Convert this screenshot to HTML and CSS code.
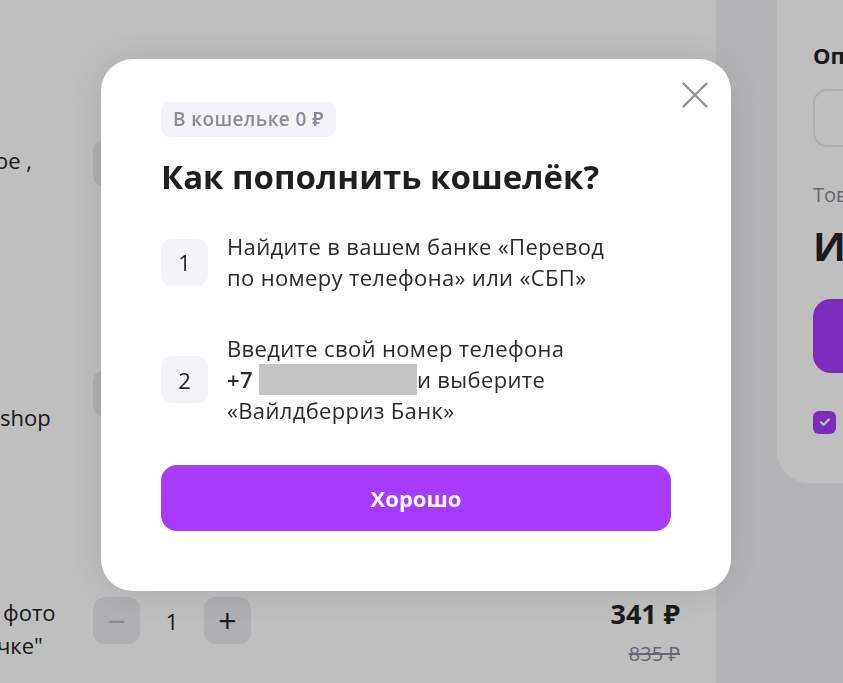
FILE: index.html
```html
<!DOCTYPE html>
<html lang="ru">
  <head>
    <meta charset="utf-8">
    <meta name="viewport" content="width=device-width">
    <title>Корзина — пополнение кошелька</title>
    <link rel="stylesheet" href="styles.css">
  </head>

<body>
  <div class="page">
    <div class="cart">
      <div class="item item-first">
        <div class="item-name">
          <p>ое ,</p>
        </div>
        <div class="counter">
          <button class="count-btn count-minus">−</button>
          <span class="count-value">1</span>
          <button class="count-btn">+</button>
        </div>
        <div class="item-price">
          <div class="price-now">199 ₽</div>
          <div class="price-old">520 ₽</div>
        </div>
      </div>

      <div class="item item-second">
        <div class="item-name">
          <p>shop</p>
        </div>
        <div class="counter">
          <button class="count-btn count-minus">−</button>
          <span class="count-value">1</span>
          <button class="count-btn">+</button>
        </div>
        <div class="item-price">
          <div class="price-now">245 ₽</div>
          <div class="price-old">610 ₽</div>
        </div>
      </div>

      <div class="item item-third">
        <div class="item-name">
          <p>фото</p>
          <p class="name-cut">чке"</p>
        </div>
        <div class="counter">
          <button class="count-btn count-minus">−</button>
          <span class="count-value">1</span>
          <button class="count-btn">+</button>
        </div>
        <div class="item-price">
          <div class="price-now">341 ₽</div>
          <div class="price-old">835 ₽</div>
        </div>
      </div>
    </div>

    <aside class="side">
      <div class="summary">
        <div class="summary-label">Оплата</div>
        <div class="summary-field"></div>
        <div class="summary-muted">Товары, 3 шт.</div>
        <div class="summary-total">Итого</div>
        <button class="summary-btn">Заказать</button>
        <div class="summary-check">
          <span class="check-box">
            <svg width="14" height="14" viewBox="0 0 14 14"><path d="M3 7.2l2.6 2.6L11 4.4" fill="none" stroke="#fff" stroke-width="2.2" stroke-linecap="round" stroke-linejoin="round"/></svg>
          </span>
          <span>Согласен</span>
        </div>
      </div>
    </aside>
  </div>

  <div class="overlay">
    <div class="modal">
      <button class="modal-close" aria-label="Закрыть">
        <svg width="26" height="26" viewBox="0 0 26 26"><path d="M1.5 1.5l23 23M24.5 1.5l-23 23" stroke="#8f8f8f" stroke-width="2.4" stroke-linecap="round"/></svg>
      </button>
      <div class="wallet-badge">В кошельке 0 ₽</div>
      <h1 class="modal-title">Как пополнить кошелёк?</h1>
      <ol class="steps">
        <li class="step">
          <span class="step-num">1</span>
          <p class="step-text">Найдите в вашем банке «Перевод по номеру телефона» или «СБП»</p>
        </li>
        <li class="step">
          <span class="step-num">2</span>
          <p class="step-text">Введите свой номер телефона<br><b>+7</b> <span class="phone-hidden"></span>и выберите «Вайлдберриз Банк»</p>
        </li>
      </ol>
      <button class="modal-btn">Хорошо</button>
    </div>
  </div>
</body>

</html>
```

FILE: styles.css
```css
* {
  box-sizing: border-box;
}

html, body {
  margin: 0;
  height: 100%;
  overflow: hidden;
}

body {
  font-family: "Open Sans", "Noto Sans", sans-serif;
  color: #242424;
  background: #fff;
}

button {
  font-family: inherit;
  border: 0;
  cursor: pointer;
}

.page {
  display: flex;
  height: 100%;
}

/* cart under the overlay */
.cart {
  width: 716px;
  flex-shrink: 0;
  padding-top: 140px;
}

.item {
  display: flex;
  align-items: flex-start;
  height: 230px;
}

.item-second {
  height: 227px;
}

.item-name {
  width: 93px;
  overflow: hidden;
  font-size: 22px;
  line-height: 33px;
  white-space: nowrap;
}

.item-name p {
  margin: 0;
}

.item-first .item-name {
  padding-top: 4px;
  margin-left: -5px;
  width: 98px;
}

.item-second .item-name {
  padding-top: 31px;
}

.item-third .item-name {
  margin-top: -1px;
  padding-left: 3px;
}

.item-third .name-cut {
  margin-left: -6px;
}

.counter {
  display: flex;
  align-items: center;
}

.count-btn {
  width: 47px;
  height: 47px;
  border-radius: 12px;
  background: #ebebf0;
  color: #242424;
  font-size: 32px;
  line-height: 47px;
  padding: 0;
}

.count-minus {
  color: #b9b9c0;
}

.count-value {
  width: 64px;
  text-align: center;
  font-size: 22px;
}

.item-price {
  margin-left: auto;
  margin-right: 36px;
  text-align: right;
}

.price-now {
  font-size: 27px;
  font-weight: 700;
  line-height: 34px;
}

.price-old {
  margin-top: 9px;
  font-size: 20px;
  color: #8b8a98;
  text-decoration: line-through;
}

/* order summary on the right */
.side {
  flex: 1;
  background: #f1f1f4;
  padding-left: 61px;
}

.summary {
  height: 483px;
  background: #fff;
  border-radius: 0 0 0 32px;
  padding: 40px 0 0 36px;
  white-space: nowrap;
  overflow: hidden;
}

.summary-label {
  font-size: 22px;
  font-weight: 700;
  line-height: 30px;
}

.summary-field {
  width: 200px;
  height: 58px;
  margin-top: 19px;
  border: 2px solid #e8e8ee;
  border-radius: 14px;
}

.summary-muted {
  margin-top: 33px;
  font-size: 20px;
  line-height: 30px;
  color: #8b8a98;
}

.summary-total {
  margin-top: 11px;
  font-size: 40px;
  font-weight: 700;
  line-height: 50px;
}

.summary-btn {
  display: block;
  width: 200px;
  height: 74px;
  margin-top: 28px;
  border-radius: 18px;
  background: #a73afd;
  color: #fff;
  font-size: 20px;
}

.summary-check {
  display: flex;
  align-items: center;
  gap: 12px;
  margin-top: 37px;
  font-size: 18px;
}

.check-box {
  display: flex;
  align-items: center;
  justify-content: center;
  width: 23px;
  height: 23px;
  border-radius: 6px;
  background: #a73afd;
}

/* modal */
.overlay {
  position: fixed;
  inset: 0;
  background: rgba(0, 0, 0, 0.25);
  display: flex;
  align-items: flex-start;
  padding: 59px 0 0 101px;
}

.modal {
  position: relative;
  width: 630px;
  padding: 43px 60px 60px;
  background: #fff;
  border-radius: 32px;
  box-shadow: 0 0 40px rgba(0, 0, 0, 0.12);
}

.modal-close {
  position: absolute;
  top: 23px;
  right: 23px;
  width: 26px;
  height: 26px;
  padding: 0;
  background: none;
}

.modal-close svg {
  display: block;
}

.wallet-badge {
  display: inline-block;
  height: 35px;
  padding: 0 12px;
  border-radius: 9px;
  background: #f4f3f8;
  color: #8b8a98;
  font-size: 19px;
  font-weight: 600;
  line-height: 35px;
  letter-spacing: 0.4px;
}

.modal-title {
  margin: 20px 0 0;
  font-size: 33px;
  font-weight: 700;
  line-height: 40px;
  color: #1f1f1f;
}

.steps {
  list-style: none;
  margin: 34px 0 0;
  padding: 0;
  display: flex;
  flex-direction: column;
  gap: 40px;
}

.step {
  display: flex;
  align-items: center;
  gap: 19px;
}

.step-num {
  flex-shrink: 0;
  width: 47px;
  height: 47px;
  border-radius: 11px;
  background: #f4f3f8;
  display: flex;
  align-items: center;
  justify-content: center;
  font-size: 22px;
  color: #242424;
}

.step-text {
  margin: 0;
  width: 400px;
  font-size: 22px;
  line-height: 31px;
  letter-spacing: 0.35px;
  color: #2a2a2a;
}

.step-text b {
  font-weight: 600;
}

.phone-hidden {
  display: inline-block;
  width: 158px;
  height: 31px;
  vertical-align: top;
  background: #c4c4c4;
}

.modal-btn {
  display: block;
  width: 100%;
  height: 66px;
  margin-top: 39px;
  border-radius: 16px;
  background: #a73afd;
  color: #fff;
  font-size: 22px;
  font-weight: 700;
}
```
